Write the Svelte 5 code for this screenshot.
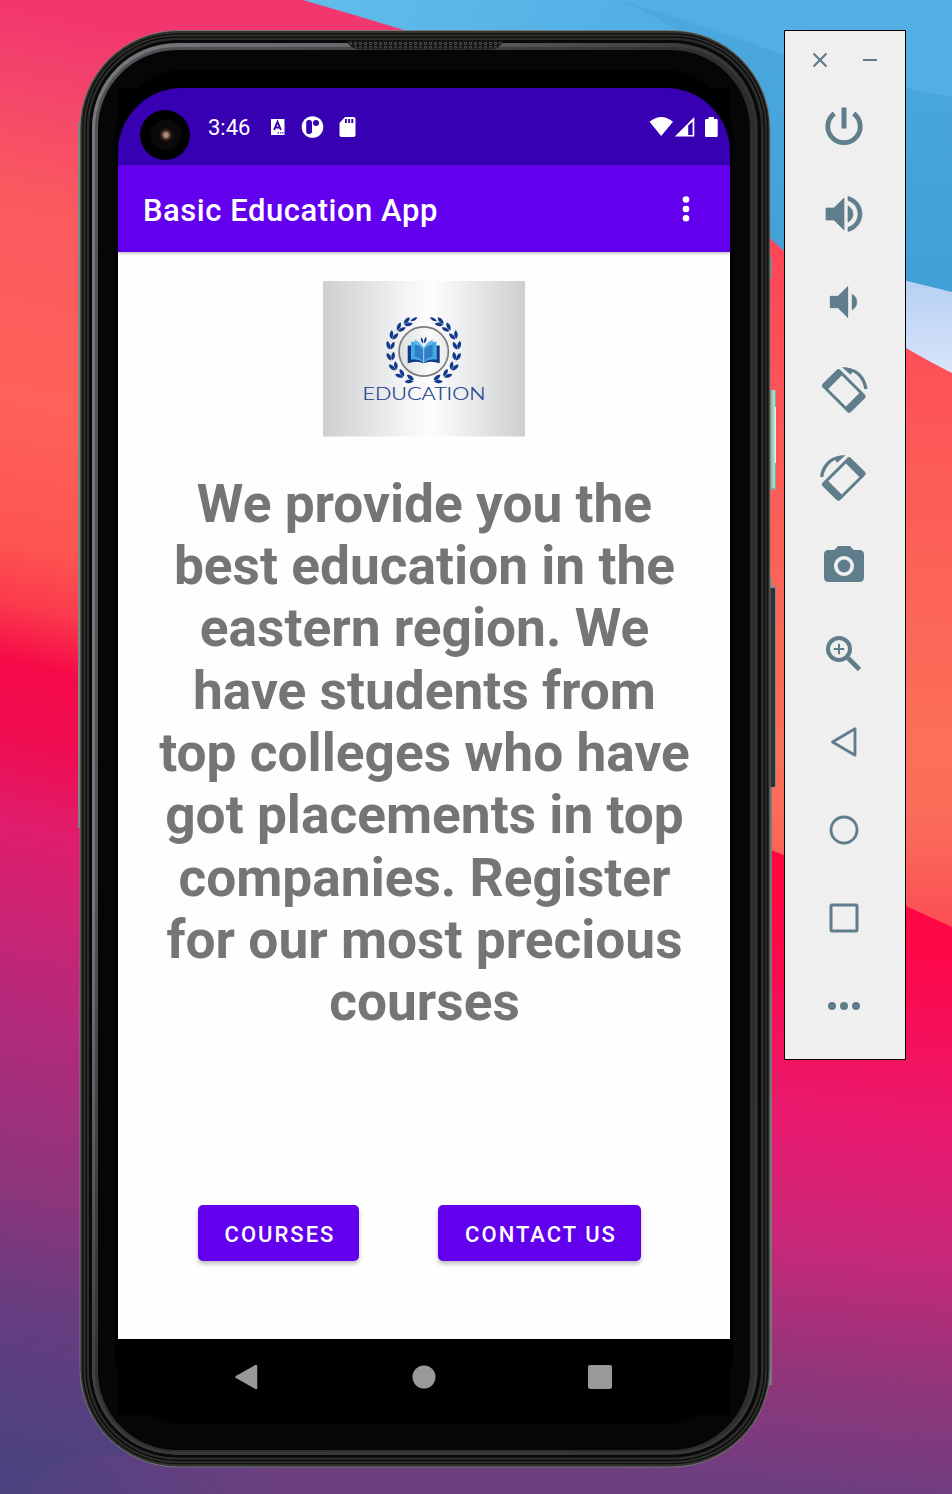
<script>
  const lines = [
    'We provide you the',
    'best education in the',
    'eastern region. We',
    'have students from',
    'top colleges who have',
    'got placements in top',
    'companies. Register',
    'for our most precious',
    'courses'
  ];

  // Leaf pairs on the left half of the wreath: x, y, direction of growth
  const leaves = [
    [-49, -88, 62], [-71, -71, 42], [-92, -48, 22], [-101, -18, 4],
    [-99, 15, -12], [-90, 46, -30], [-70, 69, -52], [-42, 85, -74]
  ];

  const tools = ['power', 'up', 'down', 'rotl', 'rotr', 'camera', 'zoom', 'back', 'home', 'recent', 'more'];
</script>

<div class="desktop">
  <svg class="wallpaper" viewBox="0 0 952 1494" preserveAspectRatio="none">
    <defs>
      <linearGradient id="wl" gradientUnits="userSpaceOnUse" x1="0" y1="0" x2="-300" y2="1400">
        <stop offset="0" stop-color="#f2366e" />
        <stop offset=".06" stop-color="#f4476a" />
        <stop offset=".13" stop-color="#fb595f" />
        <stop offset=".27" stop-color="#ff6259" />
        <stop offset=".37" stop-color="#fd5451" />
        <stop offset=".41" stop-color="#fb3a4c" />
        <stop offset=".45" stop-color="#f60a48" />
        <stop offset=".5" stop-color="#ef0c50" />
        <stop offset=".56" stop-color="#e01d6c" />
        <stop offset=".69" stop-color="#b42a7b" />
        <stop offset=".81" stop-color="#8c357c" />
        <stop offset=".89" stop-color="#663c7f" />
        <stop offset="1" stop-color="#4b437f" />
      </linearGradient>
      <linearGradient id="wb" x1="0" y1="0" x2="1" y2=".3">
        <stop offset="0" stop-color="#62bdeb" />
        <stop offset=".5" stop-color="#52afe5" />
        <stop offset="1" stop-color="#54afe5" />
      </linearGradient>
      <linearGradient id="wb2" x1="0" y1="0" x2="0" y2="1">
        <stop offset="0" stop-color="#4ba9df" />
        <stop offset="1" stop-color="#3d9cd3" />
      </linearGradient>
      <linearGradient id="ww" x1="0" y1="0" x2="0" y2="1">
        <stop offset="0" stop-color="#b4cef2" />
        <stop offset="1" stop-color="#dbe6fa" />
      </linearGradient>
      <linearGradient id="wr" gradientUnits="userSpaceOnUse" x1="0" y1="240" x2="0" y2="920">
        <stop offset="0" stop-color="#ff4456" />
        <stop offset=".35" stop-color="#fd5c57" />
        <stop offset=".75" stop-color="#fc7058" />
        <stop offset=".87" stop-color="#fb6a59" />
        <stop offset="1" stop-color="#fb5055" />
      </linearGradient>
      <linearGradient id="wm" gradientUnits="userSpaceOnUse" x1="850" y1="870" x2="790" y2="1494">
        <stop offset="0" stop-color="#ff063f" />
        <stop offset=".12" stop-color="#fd0848" />
        <stop offset=".28" stop-color="#f3125f" />
        <stop offset=".42" stop-color="#e61b70" />
        <stop offset=".6" stop-color="#c82879" />
        <stop offset=".8" stop-color="#93357a" />
        <stop offset="1" stop-color="#6b3f80" />
      </linearGradient>
      <linearGradient id="wf" x1="0" y1="0" x2="1" y2="0">
        <stop offset="0" stop-color="#6b3f80" stop-opacity="0" />
        <stop offset=".55" stop-color="#6b3f80" />
      </linearGradient>
    </defs>
    <rect width="952" height="1494" fill="url(#wl)" />
    <path d="M80 1455H520V1494H0Z" fill="url(#wf)" />
    <path d="M303 0H952V400H770L500 60Q400 28 303 0Z" fill="url(#wb)" />
    <path d="M620 0Q700 24 784 55Q860 80 952 97V400H720L690 36Z" fill="url(#wb2)" />
    <path d="M870 272L952 292V380L870 340Z" fill="url(#ww)" />
    <path d="M700 190L770 238Q860 322 906 348Q930 362 952 373V940H700Z" fill="url(#wr)" />
    <path d="M500 770Q720 830 784 855L906 906L952 927V1494H500Z" fill="url(#wm)" />
  </svg>

  <div class="phone">
    <svg class="shell" viewBox="0 0 698 1437">
      <defs>
        <linearGradient id="rim" x1="0" y1="0" x2="1" y2="0">
          <stop offset="0" stop-color="#77777c" />
          <stop offset=".45" stop-color="#66666a" />
          <stop offset="1" stop-color="#333335" />
        </linearGradient>
        <linearGradient id="rimv" x1="0" y1="0" x2="0" y2="1">
          <stop offset=".6" stop-color="#38383a" stop-opacity="0" />
          <stop offset="1" stop-color="#38383a" />
        </linearGradient>
        <linearGradient id="key" x1="0" y1="0" x2="1" y2="0">
          <stop offset="0" stop-color="#6f9c85" />
          <stop offset=".5" stop-color="#a3cdb9" />
          <stop offset="1" stop-color="#bfdccd" />
        </linearGradient>
        <pattern id="mesh" width="5" height="4" patternUnits="userSpaceOnUse">
          <rect width="5" height="4" fill="#151515" />
          <circle cx="1.5" cy="1.5" r="1.1" fill="none" stroke="#747474" stroke-width=".7" />
        </pattern>
      </defs>
      <rect x="-1" y="92" width="3" height="706" fill="#808783" />
      <rect x="690" y="227" width="3" height="21" fill="#888" />
      <rect x="690" y="360" width="7" height="100" fill="#8ba497" />
      <rect x="691" y="360" width="5" height="98" fill="url(#key)" />
      <rect x="696" y="377" width="1" height="56" fill="#e4efe9" />
      <rect x="690" y="548" width="3" height="14" fill="#888" />
      <rect x="690" y="556" width="7" height="201" fill="#85858a" />
      <rect x="690" y="558" width="6" height="199" rx="1" fill="#303033" />
      <rect x="690" y="757" width="3" height="598" fill="#77777a" />
      <rect x="1" y=".5" width="690" height="1436.5" rx="98" fill="#33332f" stroke="#7d847c" stroke-width=".8" />
      <rect x="4" y="4" width="684.5" height="1429.5" rx="94" fill="#353532" stroke="#111" stroke-width="1.5" />
      <rect x="7" y="7" width="678.5" height="1423.5" rx="91" fill="#2c2c2a" stroke="#0b0b0b" stroke-width="1.5" />
      <rect x="10" y="10" width="672" height="1417.5" rx="88" fill="#090909" />
      <rect x="13" y="13" width="665.5" height="1411.5" rx="85" fill="url(#rim)" />
      <rect x="13" y="13" width="665.5" height="1411.5" rx="85" fill="url(#rimv)" />
      <rect x="16" y="17" width="660" height="1405" rx="82" fill="#242427" opacity=".45" />
      <rect x="19" y="20" width="652" height="1400" rx="79" fill="#060607" />
      <rect x="36" y="40" width="618" height="1354" rx="70" fill="#000" />
      <path d="M268 11H424Q420 19 412 19H281Q272 19 268 11Z" fill="url(#mesh)" stroke="#1a1a1a" />
    </svg>

    <div class="screen">
      <div class="status">
        <span class="lens"></span>
        <span class="time">3:46</span>
        <svg class="notes" width="88" height="24" viewBox="0 0 88 24" fill="#fff">
          <path d="M2 4H15.5V20H2Z" />
          <path d="M5.1 15L8.5 6.8L11.9 15M6.2 12.5H10.8" fill="none" stroke="#3700b3" stroke-width="1.9" />
          <path d="M8.600 17.2h1.3v1.3H8.600zM10.900 17.2h1.3v1.3h-1.3zM13.200 17.2h1.3v1.3h-1.3z" fill="#3700b3" />
          <circle cx="43.5" cy="12" r="10.8" />
          <rect x="37.2" y="5" width="5.8" height="14" rx="2.7" fill="#3700b3" />
          <circle cx="47" cy="8" r="3" fill="#3700b3" />
          <path d="M76 2H84.5Q86.500 2 86.500 4V20Q86.500 22 84.500 22H72.500Q70.500 22 70.500 20V8Z" />
          <path d="M76 4h1.900v4H76zM79.200 4h1.900v4h-1.900zM82.300 4h1.900v4h-1.900z" fill="#3700b3" />
        </svg>
        <svg class="signals" width="70" height="24" viewBox="0 0 70 24" fill="#fff">
          <path d="M.5 6.800Q12.200-2.800 24 6.800L12.200 21Z" />
          <path fill-rule="evenodd" d="M25.800 21.500L45.300 2V21.500ZM39.200 10.500V20H43.600V6.800Z" />
          <path d="M59.500 2h5.500v2h2.500q1.200 0 1.200 1.200v15.600q0 1.200-1.200 1.200H57.200q-1.200 0-1.200-1.200V5.200Q56 4 57.200 4h2.300Z" />
        </svg>
      </div>

      <div class="appbar">
        <span class="title">Basic Education App</span>
        <svg class="menu" width="8" height="28" viewBox="0 0 8 28" fill="#fff">
          <circle cx="4" cy="4.500" r="3.300" /><circle cx="4" cy="14" r="3.300" /><circle cx="4" cy="23.300" r="3.300" />
        </svg>
      </div>

      <div class="content">
        <svg class="logo" width="202" height="156" viewBox="0 0 202 156">
          <defs>
            <linearGradient id="silver" x1="0" y1="0" x2="1" y2="0">
              <stop offset="0" stop-color="#cdcfd1" />
              <stop offset=".25" stop-color="#e4e5e7" />
              <stop offset=".42" stop-color="#f5f5f6" />
              <stop offset=".54" stop-color="#fdfdfd" />
              <stop offset=".75" stop-color="#e7e8ea" />
              <stop offset="1" stop-color="#cccecf" />
            </linearGradient>
            <linearGradient id="disc" x1="0" y1="0" x2="1" y2="0">
              <stop offset="0" stop-color="#dedfe1" />
              <stop offset=".65" stop-color="#fafafa" />
              <stop offset="1" stop-color="#e9e9eb" />
            </linearGradient>
            <g id="leaf">
              <path d="M-1 12C-13 5-13-7-9-13C0-8 3 2-1 12Z" />
              <path d="M2 12C-1 0 4-8 12-12C16-2 12 8 2 12Z" />
            </g>
            <g id="branch">
              <path d="M-19-102C-27-104-36-98-40-91C-30-90-22-94-19-102Z" />
              {#each leaves as [x, y, a]}
                <use href="#leaf" transform="translate({x} {y}) rotate({a})" />
              {/each}
            </g>
          </defs>
          <rect width="202" height="155.500" fill="url(#silver)" />
          <g transform="translate(100.700 70.500) scale(.3333)">
            <g fill="#12398b">
              <use href="#branch" />
              <use href="#branch" transform="scale(-1 1)" />
            </g>
            <circle r="74" fill="url(#disc)" stroke="#7b7b7d" stroke-width="5" />
            <path d="M-48-18H-38V23Q-12 20 0 34Q12 20 38 23V-18H48V35Q20 26 0 35Q-20 26-48 35Z" fill="#12398b" />
            <path d="M-38-30Q-12-28 0-12Q12-28 38-30V24Q12 20 0 34Q-12 20-38 24Z" fill="#41aae4" />
            <path d="M-27-22Q-8-18-1-6V33Q-10 18-27 16ZM27-22Q8-18 1-6V33Q10 18 27 16Z" fill="#2f7fc8" />
            <path d="M-27-36Q-8-28-1-11V-6Q-8-18-27-22ZM27-36Q8-28 1-11V-6Q8-18 27-22Z" fill="#5bbcec" />
            <path d="M0-12V34" stroke="#b9dcf2" stroke-width="2.500" />
            <path d="M-1-24Q-11-30-8-43L-4-38Q0-31-1-24ZM2-24Q-1-36 7-44Q12-32 2-24ZM-3-48L1-40" fill="#12398b" />
          </g>
          <text x="39.500" y="119" textLength="123" lengthAdjust="spacingAndGlyphs">EDUCATION</text>
        </svg>

        <p class="pitch">
          {#each lines as line}<span>{line}</span>{/each}
        </p>

        <div class="actions">
          <button class="courses">COURSES</button>
          <button class="contact">CONTACT US</button>
        </div>
      </div>

      <svg class="nav" width="612" height="76" viewBox="0 0 612 76" fill="#999">
        <path d="M118.500 38L138 27V49Z" stroke="#999" stroke-width="2.500" stroke-linejoin="round" />
        <circle cx="306" cy="38" r="11.500" />
        <rect x="470" y="26" width="24" height="24" rx="2" />
      </svg>
    </div>
  </div>

  <div class="toolbar">
    <div class="winctl">
      <svg width="16" height="16" viewBox="0 0 16 16"><path d="M1.500 1.500L14.500 14.500M14.500 1.500L1.500 14.500" stroke="#607d8b" stroke-width="2.200" /></svg>
      <svg width="14" height="16" viewBox="0 0 14 16"><path d="M0 8H14" stroke="#607d8b" stroke-width="2" /></svg>
    </div>
    {#each tools as t}
      <div class="tool">
        <svg width="48" height="48" viewBox="0 0 48 48" fill="#607d8b" stroke="#607d8b" stroke-width="0">
          {#if t === 'power'}
            <path d="M24 5.500V26.500" stroke-width="5" />
            <path d="M14.300 11.500A16.200 16.200 0 1 0 33.700 11.500" fill="none" stroke-width="4.800" />
          {:else if t === 'up'}
            <path transform="scale(2)" stroke-width=".35" d="M3 9v6h4l5 5V4L7 9H3zM16.500 12c0-1.770-1.020-3.290-2.500-4.030v8.050c1.480-.73 2.500-2.250 2.500-4.020zM14 3.230v2.060c2.890.86 5 3.540 5 6.710s-2.110 5.850-5 6.710v2.060c4.010-.91 7-4.490 7-8.770s-2.990-7.860-7-8.770z" />
          {:else if t === 'down'}
            <path transform="scale(2)" stroke-width=".15" d="M18.500 12c0-1.770-1.020-3.290-2.500-4.030v8.050c1.480-.73 2.500-2.250 2.500-4.020zM5 9v6h4l5 5V4L9 9H5z" />
          {:else if t === 'rotl' || t === 'rotr'}
            <g transform={t === 'rotr' ? 'translate(47.600 0) scale(-1 1)' : ''}>
              <path transform="translate(23.800 25) rotate(45)" fill-rule="evenodd" d="M-17-12.500H17Q20-12.500 20-9.500V9.500Q20 12.500 17 12.500H-17Q-20 12.500-20 9.500V-9.500Q-20-12.500-17-12.500ZM-12.500-9.500V9.500H12.500V-9.500Z" />
              <path d="M22 1.200C36 .5 46.600 10 47.400 23H44.200C43.200 15 38.600 9 32.500 6L30.500 8.700Z" />
            </g>
          {:else if t === 'camera'}
            <g transform="scale(2)">
              <path fill-rule="evenodd" d="M9 2L7.170 4H4c-1.100 0-2 .9-2 2v12c0 1.100.9 2 2 2h16c1.100 0 2-.9 2-2V6c0-1.100-.9-2-2-2h-3.170L15 2H9zm3 15c-2.760 0-5-2.240-5-5s2.240-5 5-5 5 2.240 5 5-2.240 5-5 5z" />
              <circle cx="12" cy="12" r="3.200" />
            </g>
          {:else if t === 'zoom'}
            <circle cx="19" cy="19" r="11" fill="none" stroke-width="4" />
            <path d="M28 28L39.500 39.500" stroke-width="4.600" />
            <path d="M19 13.800V24.200M13.800 19H24.200" stroke-width="2" />
          {:else if t === 'back'}
            <path d="M12.500 24L35 10.800V37.200Z" fill="none" stroke-width="2.800" stroke-linejoin="round" />
          {:else if t === 'home'}
            <circle cx="24" cy="24" r="13" fill="none" stroke-width="2.800" />
          {:else if t === 'recent'}
            <rect x="11" y="11" width="26" height="26" rx="1" fill="none" stroke-width="3" />
          {:else}
            <circle cx="12" cy="24" r="4" /><circle cx="24" cy="24" r="4" /><circle cx="36" cy="24" r="4" />
          {/if}
        </svg>
      </div>
    {/each}
  </div>
</div>

<style>
  .desktop {
    position: relative;
    box-sizing: border-box;
    width: 952px;
    height: 1494px;
    padding: 30px 0 0 79px;
    display: flex;
    align-items: flex-start;
    gap: 13px;
    overflow: hidden;
    font-family: Roboto, sans-serif;
  }
  .wallpaper {
    position: absolute;
    inset: 0;
    width: 952px;
    height: 1494px;
  }
  .phone {
    position: relative;
    box-sizing: border-box;
    width: 692px;
    height: 1437px;
    padding: 58px 41px 0 39px;
  }
  .shell {
    position: absolute;
    left: 0;
    top: 0;
    width: 698px;
    height: 1437px;
    overflow: visible;
  }
  .screen {
    position: relative;
    display: flex;
    flex-direction: column;
    width: 612px;
    height: 1327px;
    background: #000;
  }
  .status {
    box-sizing: border-box;
    height: 77px;
    flex: none;
    display: flex;
    align-items: center;
    padding: 0 11px 0 22px;
    color: #fff;
    background: #3700b3;
    border-radius: 64px 64px 0 0;
  }
  .lens {
    width: 50px;
    height: 50px;
    border-radius: 50%;
    margin: 16px 18px 0 0;
    background: radial-gradient(circle at 52% 50%, #b08d74 0 2px, #4a362c 4px, #15100e 6px, #0a0a0a 8px, #0a0a0a 14px, #000 17px);
  }
  .time {
    width: 61px;
    padding-top: 2px;
    font-size: 22px;
    line-height: 26px;
    white-space: nowrap;
  }
  .signals {
    margin-left: auto;
  }
  .appbar {
    box-sizing: border-box;
    position: relative;
    height: 87px;
    flex: none;
    display: flex;
    align-items: center;
    justify-content: space-between;
    padding: 4px 40px 0 25px;
    background: #6200ee;
    box-shadow: 0 1px 3px rgba(0, 0, 0, 0.3);
  }
  .title {
    color: #fff;
    font-size: 31px;
    font-weight: 500;
    letter-spacing: 0.530px;
    white-space: nowrap;
  }
  .menu {
    margin-bottom: 4px;
  }
  .content {
    box-sizing: border-box;
    height: 1087px;
    flex: none;
    display: flex;
    flex-direction: column;
    align-items: center;
    padding-top: 29px;
    background: #fefefe;
  }
  .logo {
    flex: none;
  }
  .logo text {
    font: 300 17px Lato, sans-serif;
    fill: #12398b;
    stroke: #12398b;
    stroke-width: 0.2px;
  }
  .pitch {
    height: 562px;
    margin: 35.600px 0 0 1px;
    display: flex;
    flex-direction: column;
    align-items: center;
    color: #757575;
    font-size: 53.250px;
    font-weight: 700;
    line-height: 62.350px;
    white-space: nowrap;
  }
  .actions {
    display: flex;
    gap: 79px;
    align-self: flex-start;
    margin: 170.400px 0 0 80px;
  }
  button {
    height: 56.500px;
    padding: 3px 0 0;
    border: 0;
    border-radius: 5px;
    color: #fff;
    background: #6200ee;
    font: 500 22px Roboto, sans-serif;
    letter-spacing: 2px;
    text-indent: 3px;
    white-space: nowrap;
    box-shadow: 0 3px 4px rgba(0, 0, 0, 0.25);
  }
  .courses {
    width: 161px;
  }
  .contact {
    width: 203px;
  }
  .nav {
    flex: none;
  }
  .toolbar {
    position: relative;
    box-sizing: border-box;
    width: 122px;
    height: 1030px;
    border: 1px solid #000;
    background: #efefef;
  }
  .winctl {
    box-sizing: border-box;
    height: 51px;
    padding: 21px 28px 0 27px;
    display: flex;
    justify-content: space-between;
  }
  .tool {
    height: 88px;
    padding-left: 35px;
    display: flex;
    align-items: center;
  }
</style>
